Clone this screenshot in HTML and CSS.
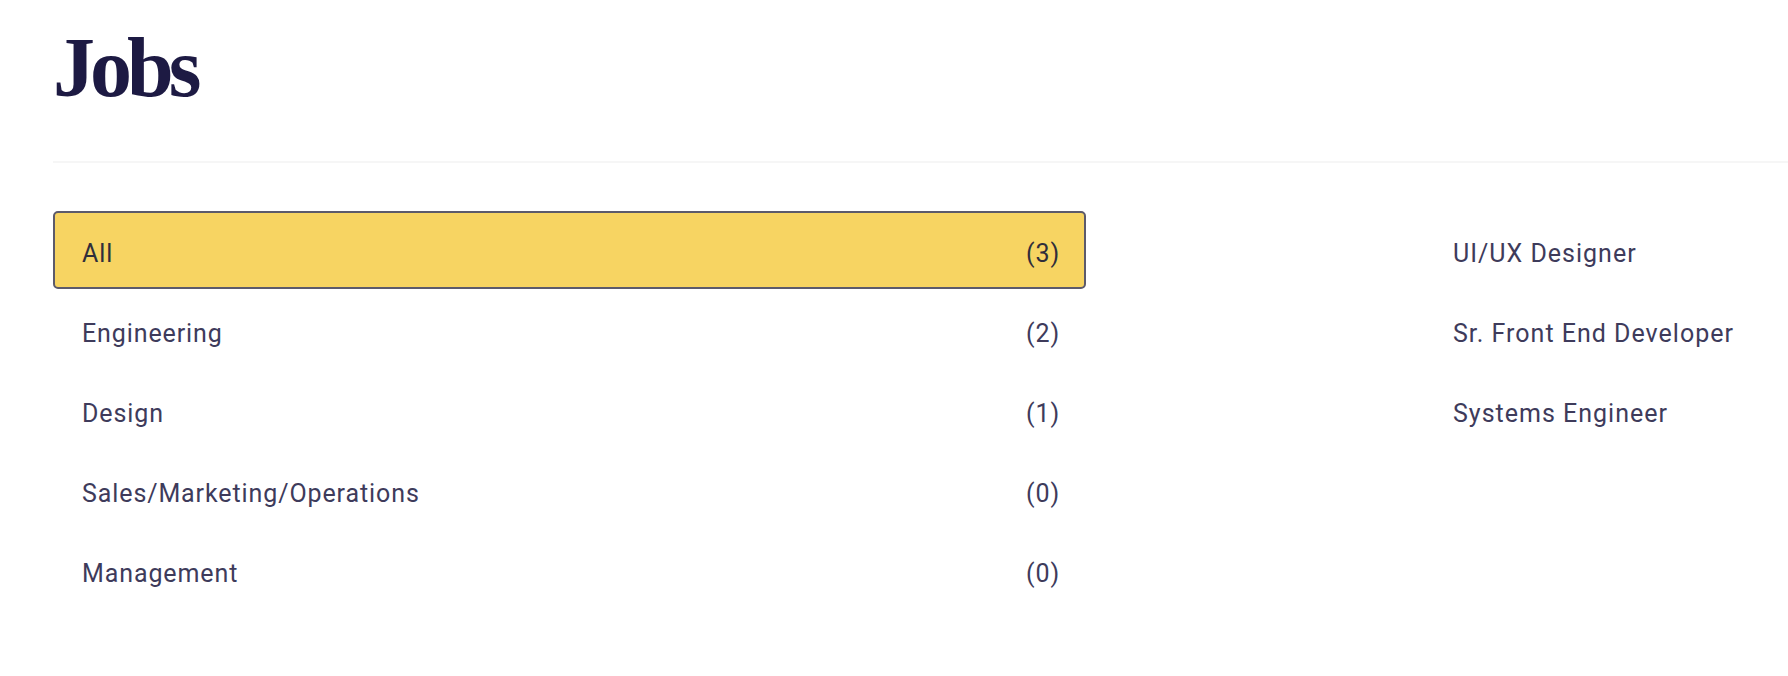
FILE: index.html
```html
<!DOCTYPE html>
<html>
<head>
<meta charset="utf-8">
<link rel="stylesheet" href="styles.css">
</head>
<body>
<main class="page">
  <h1 class="title">Jobs</h1>
  <hr class="divider">
  <section class="jobs">
    <ul class="cats">
      <li class="cat active"><span>All</span><span class="count">(3)</span></li>
      <li class="cat"><span>Engineering</span><span class="count">(2)</span></li>
      <li class="cat"><span>Design</span><span class="count">(1)</span></li>
      <li class="cat"><span>Sales/Marketing/Operations</span><span class="count">(0)</span></li>
      <li class="cat"><span>Management</span><span class="count">(0)</span></li>
    </ul>
    <ul class="list">
      <li class="job">UI/UX Designer</li>
      <li class="job">Sr. Front End Developer</li>
      <li class="job">Systems Engineer</li>
    </ul>
  </section>
</main>
</body>
</html>
```
FILE: styles.css
```css
html, body {
  margin: 0;
  padding: 0;
  background: #ffffff;
}
.page {
  padding: 20px 0 0 53px;
  font-family: Roboto, "Liberation Sans", sans-serif;
  color: #3e3b5b;
  overflow: hidden;
}
.title {
  margin: 0;
  font-family: "Liberation Serif", serif;
  font-weight: 700;
  font-size: 84px;
  line-height: 96px;
  color: #1d1a43;
  letter-spacing: -5px;
}
.divider {
  margin: 45px 0 0 0;
  border: 0;
  height: 2px;
  background: #f6f6f6;
}
.jobs {
  display: flex;
  margin-top: 48px;
}
.cats, .list {
  list-style: none;
  margin: 0;
  padding: 0;
  display: flex;
  flex-direction: column;
  gap: 2px;
}
.cats {
  width: 1033px;
}
.cat {
  box-sizing: border-box;
  height: 78px;
  display: flex;
  align-items: center;
  justify-content: space-between;
  padding: 6px 24px 0 27px;
  border: 2px solid transparent;
  border-radius: 5px;
  font-size: 25px;
  letter-spacing: 0.9px;
}
.cat.active {
  background: #f7d462;
  border-color: #5c5a6b;
  color: #302e3b;
}
.list {
  margin-left: 367px;
}
.job {
  box-sizing: border-box;
  height: 78px;
  padding-top: 6px;
  display: flex;
  align-items: center;
  font-size: 25px;
  letter-spacing: 1px;
  white-space: nowrap;
}
```
